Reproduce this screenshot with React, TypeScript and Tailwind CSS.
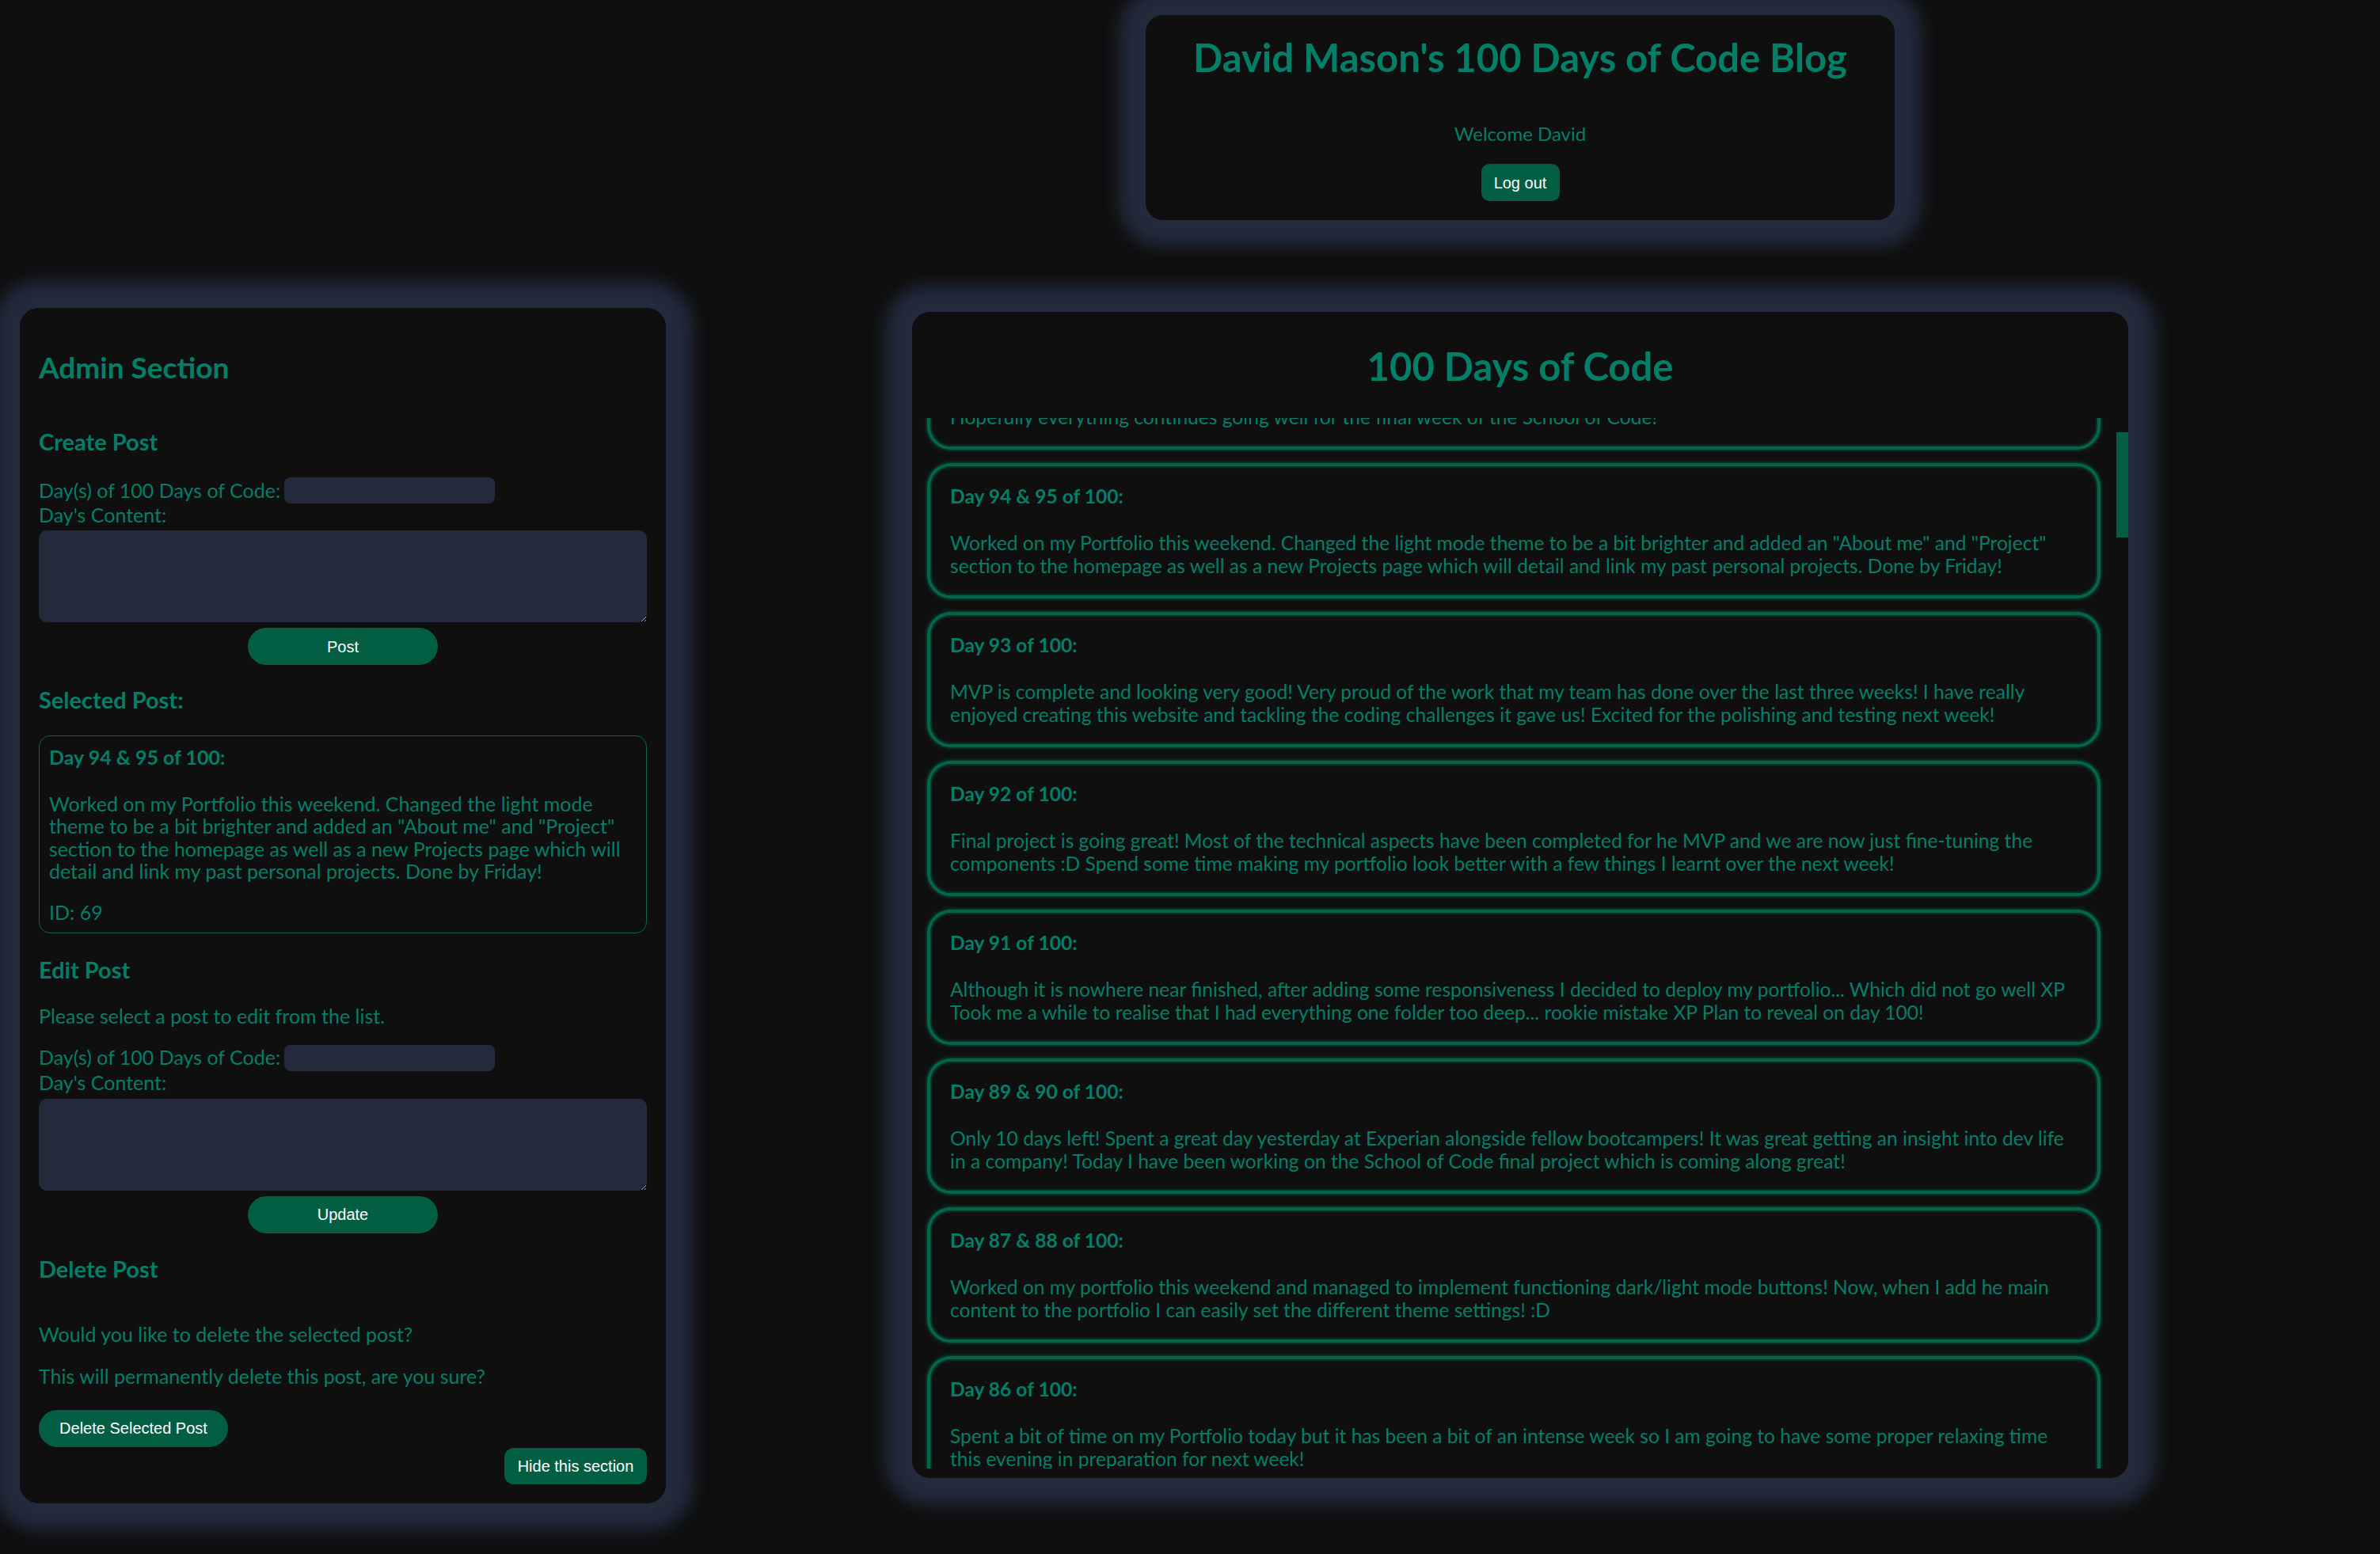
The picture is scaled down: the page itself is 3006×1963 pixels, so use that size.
import React, { useLayoutEffect, useRef, useState } from 'react';

type Post = { title: string; text: string };

const posts: Post[] = [
  {
    title: 'Day 96 of 100:',
    text: 'Last full week of the bootcamp is about to start and the final project is shaping up nicely.\nSpent the weekend resting and tidying up a few bits of my portfolio.\nHopefully everything continues going well for the final week of the School of Code!',
  },
  {
    title: 'Day 94 & 95 of 100:',
    text: 'Worked on my Portfolio this weekend. Changed the light mode theme to be a bit brighter and added an "About me" and "Project" section to the homepage as well as a new Projects page which will detail and link my past personal projects. Done by Friday!',
  },
  {
    title: 'Day 93 of 100:',
    text: 'MVP is complete and looking very good! Very proud of the work that my team has done over the last three weeks! I have really enjoyed creating this website and tackling the coding challenges it gave us! Excited for the polishing and testing next week!',
  },
  {
    title: 'Day 92 of 100:',
    text: 'Final project is going great! Most of the technical aspects have been completed for he MVP and we are now just fine-tuning the components :D Spend some time making my portfolio look better with a few things I learnt over the next week!',
  },
  {
    title: 'Day 91 of 100:',
    text: 'Although it is nowhere near finished, after adding some responsiveness I decided to deploy my portfolio... Which did not go well XP Took me a while to realise that I had everything one folder too deep... rookie mistake XP Plan to reveal on day 100!',
  },
  {
    title: 'Day 89 & 90 of 100:',
    text: 'Only 10 days left! Spent a great day yesterday at Experian alongside fellow bootcampers! It was great getting an insight into dev life in a company! Today I have been working on the School of Code final project which is coming along great!',
  },
  {
    title: 'Day 87 & 88 of 100:',
    text: 'Worked on my portfolio this weekend and managed to implement functioning dark/light mode buttons! Now, when I add he main content to the portfolio I can easily set the different theme settings! :D',
  },
  {
    title: 'Day 86 of 100:',
    text: 'Spent a bit of time on my Portfolio today but it has been a bit of an intense week so I am going to have some proper relaxing time this evening in preparation for next week!',
  },
];

const fillerText = [
  "Another busy day at the bootcamp working through this week's material, then practised with a few small exercises in the evening to make sure everything sticks before tomorrow.",
  'Spent some time revising what we covered this week and started planning the next part of my portfolio. Still lots to learn but really enjoying the process and the community!',
  'Pair programming today on a React project. Learnt a lot about state and props and how to structure components so that they are easy to test and reuse later on!',
];

const allPosts: Post[] = [
  ...posts,
  ...Array.from({ length: 62 }, (_, i) => ({
    title: `Day ${85 - i} of 100:`,
    text: fillerText[i % fillerText.length],
  })),
];

const PostCard = ({ post, cardRef }: { post: Post; cardRef?: React.Ref<HTMLDivElement> }) => (
  <div
    ref={cardRef}
    className="mb-[17px] rounded-[30px] border-4 border-[#03664c] px-[25px] pt-[23px] pb-[23px] shadow-[0_0_5px_#03664c,inset_0_0_4px_#03664c]"
  >
    <h3 className="text-[24.6px] font-bold leading-[29px]">{post.title}</h3>
    <p className="mt-[30px] whitespace-pre-line text-[24.6px] leading-[29px]">{post.text}</p>
  </div>
);

const btn = "bg-[#025e42] font-['Liberation_Sans',Arial,sans-serif] text-[20px] text-white";

export default function App() {
  const listRef = useRef<HTMLDivElement>(null);
  const secondRef = useRef<HTMLDivElement>(null);
  const [thumb, setThumb] = useState({ top: 0, height: 0 });

  useLayoutEffect(() => {
    const list = listRef.current;
    if (!list || !secondRef.current) return;
    // keep the list scrolled so "Day 94 & 95" sits just below the title
    list.scrollTop = secondRef.current.offsetTop - 57;
    const track = list.clientHeight;
    setThumb({
      top: (list.scrollTop / list.scrollHeight) * track,
      height: (track * track) / list.scrollHeight,
    });
  }, []);

  return (
    <div className="flex min-h-screen items-start bg-[#0f0f0f] font-['Lato',sans-serif] text-[#007f68]">
      {/* Admin section */}
      <aside className="w-[866px] shrink-0 pl-[25px] pt-[389px]">
        <div className="w-[816px] rounded-[24px] bg-[#0f0f0f] px-[24px] pt-[54px] pb-[24px] shadow-[0_0_20px_34px_#222a3c]">
          <h2 className="text-[37px] font-bold leading-[42px]">Admin Section</h2>

          <h3 className="mt-[56px] text-[29px] font-bold leading-[34px]">Create Post</h3>
          <div className="mt-[28px] flex h-[33px] items-center text-[25px]">
            <label>Day(s) of 100 Days of Code:</label>
            <input className="ml-[5px] h-[33px] w-[266px] rounded-[8px] bg-[#222a3c] outline-none" />
          </div>
          <label className="block text-[25px] leading-[29px]">Day's Content:</label>
          <textarea className="mt-[5px] block h-[116px] w-full rounded-[10px] border-0 bg-[#222a3c] outline-none" />
          <div className="mt-[7px] flex justify-center">
            <button className={`${btn} h-[47px] w-[240px] rounded-full`}>Post</button>
          </div>

          <h3 className="mt-[27px] text-[29px] font-bold leading-[34px]">Selected Post:</h3>
          <div className="mt-[28px] rounded-[14px] border-[1.5px] border-[#03664c] px-[12px] pt-[12px] pb-[11px] text-[25px]">
            <h4 className="font-bold leading-[29px]">Day 94 &amp; 95 of 100:</h4>
            <p className="mt-[30px] leading-[28.4px]">
              Worked on my Portfolio this weekend. Changed the light mode theme to be a bit brighter and added an "About
              me" and "Project" section to the homepage as well as a new Projects page which will detail and link my
              past personal projects. Done by Friday!
            </p>
            <p className="mt-[23px] leading-[29px]">ID: 69</p>
          </div>

          <h3 className="mt-[29px] text-[29px] font-bold leading-[34px]">Edit Post</h3>
          <p className="mt-[27px] text-[25px] leading-[29px]">Please select a post to edit from the list.</p>
          <div className="mt-[22px] flex h-[33px] items-center text-[25px]">
            <label>Day(s) of 100 Days of Code:</label>
            <input className="ml-[5px] h-[33px] w-[266px] rounded-[8px] bg-[#222a3c] outline-none" />
          </div>
          <label className="block text-[25px] leading-[29px]">Day's Content:</label>
          <textarea className="mt-[6px] block h-[116px] w-full rounded-[10px] border-0 bg-[#222a3c] outline-none" />
          <div className="mt-[7px] flex justify-center">
            <button className={`${btn} h-[47px] w-[240px] rounded-full`}>Update</button>
          </div>

          <h3 className="mt-[28px] text-[29px] font-bold leading-[34px]">Delete Post</h3>
          <p className="mt-[51px] text-[25px] leading-[29px]">Would you like to delete the selected post?</p>
          <p className="mt-[24px] text-[25px] leading-[29px]">This will permanently delete this post, are you sure?</p>
          <button className={`${btn} mt-[28px] block h-[47px] w-[239px] rounded-full`}>Delete Selected Post</button>
          <div className="mt-[1px] flex justify-end">
            <button className={`${btn} h-[46px] w-[180px] rounded-[12px]`}>Hide this section</button>
          </div>
        </div>
      </aside>

      {/* Header and posts */}
      <main className="flex flex-1 flex-col items-center pr-[32px]">
        <header className="mt-[19px] flex w-[946px] flex-col items-center rounded-[22px] bg-[#0f0f0f] pt-[25px] pb-[24px] shadow-[0_0_20px_34px_#222a3c]">
          <h1 className="text-[49px] font-bold leading-[56px]">David Mason's 100 Days of Code Blog</h1>
          <p className="mt-[54px] text-[24px] leading-[29px]">Welcome David</p>
          <button className={`${btn} mt-[24px] h-[47px] w-[99px] rounded-[10px]`}>Log out</button>
        </header>

        <section className="mt-[116px] flex h-[1473px] w-[1536px] flex-col rounded-[22px] bg-[#0f0f0f] pt-[40px] pb-[12px] shadow-[0_0_20px_34px_#222a3c]">
          <h2 className="text-center text-[49px] font-bold leading-[56px]">100 Days of Code</h2>
          <div className="mt-[38px] flex min-h-0 flex-1">
            <div
              ref={listRef}
              className="relative min-h-0 flex-1 overflow-y-auto pl-[19px] pr-[20px] pt-[16px] [scrollbar-width:none]"
            >
              {allPosts.map((post, i) => (
                <PostCard key={post.title} post={post} cardRef={i === 1 ? secondRef : undefined} />
              ))}
            </div>
            {/* scrollbar track */}
            <div className="relative w-[15px] shrink-0">
              <div className="absolute inset-x-0 bg-[#025e42]" style={{ top: thumb.top, height: thumb.height }} />
            </div>
          </div>
        </section>
      </main>
    </div>
  );
}
